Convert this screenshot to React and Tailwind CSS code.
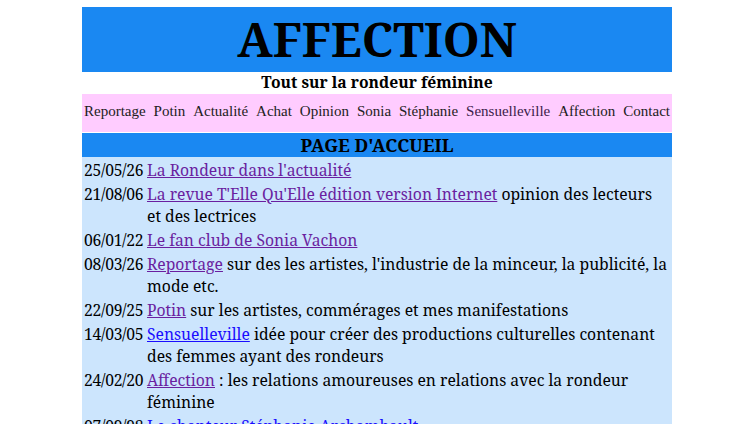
import React from "react";

const NAV = [
  "Reportage",
  "Potin",
  "Actualité",
  "Achat",
  "Opinion",
  "Sonia",
  "Stéphanie",
  "Sensuelleville",
  "Affection",
  "Contact",
];

const NEWS = [
  { date: "25/05/26", link: "La Rondeur dans l'actualité", rest: "" },
  {
    date: "21/08/06",
    link: "La revue T'Elle Qu'Elle édition version Internet",
    rest: " opinion des lecteurs et des lectrices",
  },
  { date: "06/01/22", link: "Le fan club de Sonia Vachon", rest: "" },
  {
    date: "08/03/26",
    link: "Reportage",
    rest: " sur des les artistes, l'industrie de la minceur, la publicité, la mode etc.",
  },
  {
    date: "22/09/25",
    link: "Potin",
    rest: " sur les artistes, commérages et mes manifestations",
  },
  {
    date: "14/03/05",
    link: "Sensuelleville",
    rest: " idée pour créer des productions culturelles contenant des femmes ayant des rondeurs",
    fresh: true,
  },
  {
    date: "24/02/20",
    link: "Affection",
    rest: " : les relations amoureuses en relations avec la rondeur féminine",
  },
  {
    date: "07/09/98",
    link: "Le chanteur Stéphanie Archambault",
    rest: "",
    fresh: true,
  },
];

export default function App() {
  return (
    <div className="min-h-screen bg-white pt-[7px] font-['Noto_Serif','DejaVu_Serif',serif] text-black">
      <div className="mx-auto w-[590px]">
        <div className="flex h-[65px] items-center justify-center bg-[#1a88f2]">
          <h1 className="text-[47px] font-bold leading-none">AFFECTION</h1>
        </div>
        <div className="flex h-[22px] items-center justify-center text-[15.7px] font-bold">
          Tout sur la rondeur féminine
        </div>
        <div className="flex h-[38px] items-center justify-between bg-[#ffccff] px-[2px] pb-[3px] font-['Liberation_Serif',serif] text-[15px] text-[#222]">
          {NAV.map((item) => (
            <span
              key={item}
              className={item === "Sensuelleville" ? "text-[#3b1c4a]" : ""}
            >
              {item}
            </span>
          ))}
        </div>
        <div className="mt-px flex h-[24px] items-center justify-center bg-[#1a88f2] text-[18px] font-bold">
          PAGE D'ACCUEIL
        </div>
        <div className="flex flex-col gap-[2px] bg-[#cce5fd] pl-[2px] pr-[4px] pt-[2px] pb-4 text-[15.7px] leading-[22px]">
          {NEWS.map((row) => (
            <div key={row.date} className="flex gap-[2px]">
              <div className="w-[61px] shrink-0 tracking-[-0.3px]">{row.date}</div>
              <div className="flex-1">
                <a
                  href="#"
                  className={
                    row.fresh
                      ? "text-[#1a0dff] underline"
                      : "text-[#6a1fa0] underline"
                  }
                >
                  {row.link}
                </a>
                {row.rest}
              </div>
            </div>
          ))}
        </div>
      </div>
    </div>
  );
}
